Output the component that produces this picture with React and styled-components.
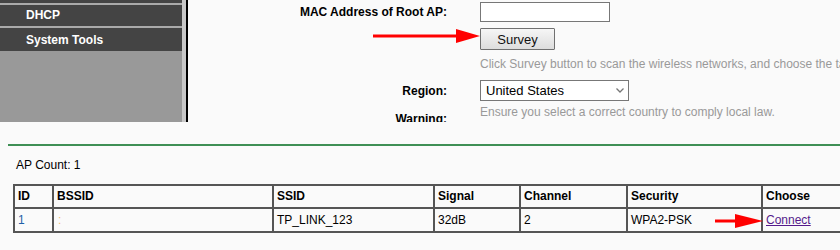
import React from "react";
import styled, { createGlobalStyle } from "styled-components";

const GlobalStyle = createGlobalStyle`
  html, body {
    margin: 0;
    padding: 0;
    background: #fafafa;
    overflow: hidden;
  }
  body {
    font-family: "Liberation Sans", Arial, sans-serif;
    font-size: 12px;
    color: #000;
  }
`;

const menu = ["Wireless", "DHCP", "System Tools"];

const columns = [
  { key: "id", title: "ID", width: 39 },
  { key: "bssid", title: "BSSID", width: 220 },
  { key: "ssid", title: "SSID", width: 161 },
  { key: "signal", title: "Signal", width: 86 },
  { key: "channel", title: "Channel", width: 107 },
  { key: "security", title: "Security", width: 135 },
  { key: "choose", title: "Choose", width: 100 },
];

function Arrow({ width, head, className }) {
  return (
    <svg className={className} width={width} height={16} viewBox={`0 0 ${width} 16`}>
      <rect x="0" y="6.5" width={width - head + 1} height="3" fill="#f00" />
      <polygon points={`${width - head},1 ${width},8 ${width - head},15`} fill="#f00" />
    </svg>
  );
}

export default function App() {
  return (
    <>
      <GlobalStyle />
      <TopFrame>
        <Sidebar>
          <MenuList>
            {menu.map((item) => (
              <MenuItem key={item}>{item}</MenuItem>
            ))}
          </MenuList>
        </Sidebar>
        <Content>
          <Row>
            <Label>MAC Address of Root AP:</Label>
            <MacInput type="text" />
          </Row>
          <Row $gap={6}>
            <Label />
            <SurveyButton>Survey</SurveyButton>
          </Row>
          <Row $gap={7}>
            <Label />
            <Note>Click Survey button to scan the wireless networks, and choose the target one.</Note>
          </Row>
          <Row $gap={9}>
            <Label>Region:</Label>
            <SelectBox>
              <span>United States</span>
              <svg width="8" height="5" viewBox="0 0 8 5">
                <path d="M0.5 0.5 L4 4 L7.5 0.5" fill="none" stroke="#777" strokeWidth="1.3" />
              </svg>
            </SelectBox>
          </Row>
          <Row $gap={4} $pull={7}>
            <Label />
            <Note>Ensure you select a correct country to comply local law.</Note>
          </Row>
          <Row>
            <Label>Warning:</Label>
          </Row>
        </Content>
        <TopArrow width={107} head={24} />
      </TopFrame>

      <Lower>
        <Rule />
        <ApCount>AP Count: 1</ApCount>
        <ScanTable>
          <colgroup>
            {columns.map((c) => (
              <Col key={c.key} $w={c.width} />
            ))}
          </colgroup>
          <thead>
            <tr>
              {columns.map((c) => (
                <HeadCell key={c.key}>{c.title}</HeadCell>
              ))}
            </tr>
          </thead>
          <tbody>
            <tr>
              <Cell $blue>1</Cell>
              <Cell>
                <Blur>:</Blur>
              </Cell>
              <Cell>TP_LINK_123</Cell>
              <Cell>32dB</Cell>
              <Cell>2</Cell>
              <Cell>WPA2-PSK</Cell>
              <Cell>
                <ConnectLink href="#">Connect</ConnectLink>
              </Cell>
            </tr>
          </tbody>
        </ScanTable>
        <RowArrow width={48} head={28} />
      </Lower>
    </>
  );
}

const TopFrame = styled.div`
  position: relative;
  display: flex;
  height: 122px;
  overflow: hidden;
`;

const Sidebar = styled.nav`
  width: 182px;
  flex: none;
  background: #999;
  border-right: 4px solid #c8c8c8;
`;

const MenuList = styled.ul`
  list-style: none;
  margin: -18px 0 0;
  padding: 0;
`;

const MenuItem = styled.li`
  height: 21px;
  line-height: 21px;
  padding-left: 26px;
  background: #444;
  border-bottom: 2px solid #aaa;
  color: #fff;
  font-weight: bold;
  font-size: 12px;

  &:last-child {
    height: 23px;
    line-height: 24px;
    border-bottom: 0;
  }
`;

const Content = styled.div`
  flex: 1;
  display: flex;
  flex-direction: column;
  padding-top: 2px;
  border-left: 2px solid #000;
  background: #fafafa;
  min-width: 0;
`;

const Row = styled.div`
  display: flex;
  align-items: center;
  margin-top: ${(p) => p.$gap || 0}px;
  margin-bottom: ${(p) => -(p.$pull || 0)}px;
`;

const Label = styled.div`
  width: 259px;
  flex: none;
  margin-right: 33px;
  text-align: right;
  font-weight: bold;
  font-size: 12px;
  line-height: 14px;
  color: #000;
`;

const MacInput = styled.input`
  width: 130px;
  height: 20px;
  box-sizing: border-box;
  margin: 0;
  border: 1px solid #777;
  background: #fff;
  outline: none;
`;

const SurveyButton = styled.button`
  width: 75px;
  height: 22px;
  margin: 0;
  padding: 0;
  border: 1px solid #707070;
  border-radius: 1px;
  background: linear-gradient(#f6f6f6, #dddddd);
  font-family: "Liberation Sans", Arial, sans-serif;
  font-size: 13px;
  color: #111;
`;

const Note = styled.div`
  font-size: 12px;
  line-height: 14px;
  color: #999;
  white-space: nowrap;
`;

const SelectBox = styled.div`
  width: 149px;
  height: 21px;
  box-sizing: border-box;
  display: flex;
  align-items: center;
  justify-content: space-between;
  padding: 0 4px 0 5px;
  border: 1px solid #777;
  background: #fff;
  font-size: 13px;
  color: #000;
`;

const TopArrow = styled(Arrow)`
  position: absolute;
  left: 373px;
  top: 28px;
`;

const Lower = styled.section`
  position: relative;
  padding-top: 22px;
`;

const Rule = styled.hr`
  margin: 0 0 0 8px;
  height: 2px;
  border: 0;
  background: #3f8f55;
`;

const ApCount = styled.div`
  margin: 12px 0 0 16px;
  font-size: 12px;
  line-height: 14px;
`;

const ScanTable = styled.table`
  margin: 12px 0 0 13px;
  border-collapse: separate;
  border-spacing: 0;
  table-layout: fixed;
  width: 850px;
  border-top: 2px solid #555;
  border-left: 2px solid #555;
`;

const Col = styled.col`
  width: ${(p) => p.$w}px;
`;

const HeadCell = styled.th`
  padding: 0 3px;
  line-height: 21px;
  text-align: left;
  font-weight: bold;
  font-size: 12px;
  border-right: 2px solid #555;
  border-bottom: 2px solid #555;
  white-space: nowrap;
`;

const Cell = styled.td`
  padding: 0 3px;
  line-height: 22px;
  font-size: 12px;
  color: ${(p) => (p.$blue ? "#1f5fa8" : "#000")};
  border-right: 2px solid #555;
  border-bottom: 2px solid #555;
  white-space: nowrap;
`;

const Blur = styled.span`
  color: #f2c07a;
  padding-left: 1px;
`;

const ConnectLink = styled.a`
  color: #551a8b;
  text-decoration: underline;
`;

const RowArrow = styled(Arrow)`
  position: absolute;
  left: 715px;
  top: 91px;
`;
